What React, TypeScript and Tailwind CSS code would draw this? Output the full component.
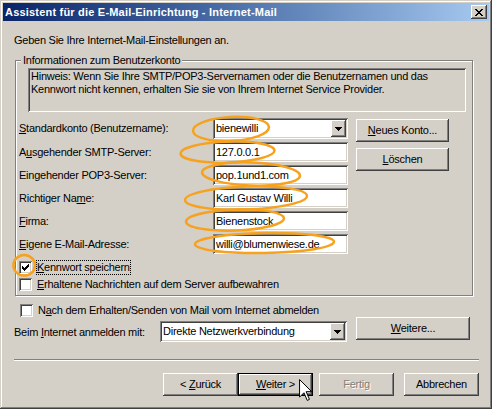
import React from "react";

const RAISED =
  "bg-[#d4d0c8] shadow-[inset_-1px_-1px_0_#404040,inset_1px_1px_0_#ffffff,inset_-2px_-2px_0_#808080,inset_2px_2px_0_#d4d0c8]";
const SUNKEN =
  "shadow-[inset_1px_1px_0_#808080,inset_-1px_-1px_0_#ffffff,inset_2px_2px_0_#404040,inset_-2px_-2px_0_#d4d0c8]";

function Pixels({ rows, color = "#000" }: { rows: string[]; color?: string }) {
  return (
    <svg width={rows[0].length} height={rows.length} shapeRendering="crispEdges" className="block">
      {rows.flatMap((r, y) =>
        r.split("").map((c, x) =>
          c === "X" ? <rect key={`${x}-${y}`} x={x} y={y} width={1} height={1} fill={color} /> : null
        )
      )}
    </svg>
  );
}

const CHECK = ["......X", ".....XX", "X...XXX", "XX.XXX.", "XXXXX..", ".XXX...", "..X...."];
const CLOSE = ["XX....XX", ".XX..XX.", "..XXXX..", "...XX...", "..XXXX..", ".XX..XX.", "XX....XX"];
const ARROW = ["XXXXXXX", ".XXXXX.", "..XXX..", "...X..."];

function Button({
  children,
  className = "",
  isDefault = false,
  disabled = false,
}: {
  children: React.ReactNode;
  className?: string;
  isDefault?: boolean;
  disabled?: boolean;
}) {
  const inner = (
    <div
      className={`w-full h-full flex items-center justify-center leading-[13px] ${RAISED} ${
        disabled ? "text-[#808080] [text-shadow:1px_1px_0_#ffffff]" : "text-black"
      }`}
    >
      {children}
    </div>
  );
  return (
    <div className={`h-[23px] ${isDefault ? "border border-black" : ""} ${className}`}>{inner}</div>
  );
}

function TextBox({ value }: { value: string }) {
  return (
    <div className={`w-[135px] h-[20px] bg-white ${SUNKEN} flex items-center pl-[3px] leading-[13px] whitespace-nowrap`}>
      {value}
    </div>
  );
}

function Combo({ value, className = "" }: { value: string; className?: string }) {
  return (
    <div className={`h-[21px] bg-white ${SUNKEN} flex items-center p-[2px] ${className}`}>
      <div className="flex-1 pl-[1px] leading-[13px] whitespace-nowrap overflow-hidden">{value}</div>
      <div className={`w-[15px] h-[17px] flex items-center justify-center ${RAISED}`}>
        <Pixels rows={ARROW} />
      </div>
    </div>
  );
}

function CheckBox({ checked }: { checked: boolean }) {
  return (
    <div className={`w-[13px] h-[13px] shrink-0 bg-white ${SUNKEN} flex items-center justify-center`}>
      {checked ? <Pixels rows={CHECK} /> : null}
    </div>
  );
}

function Row({ label, children }: { label: React.ReactNode; children: React.ReactNode }) {
  return (
    <div className="flex items-center">
      <div className="w-[194px] leading-[13px] whitespace-nowrap">{label}</div>
      {children}
    </div>
  );
}

export default function App() {
  return (
    <div
      className="relative w-[492px] h-[409px] p-[3px] bg-[#d4d0c8] text-black text-[11px] tracking-[-0.25px] font-['Liberation_Sans',Arial,sans-serif] shadow-[inset_-1px_-1px_0_#404040,inset_1px_1px_0_#d4d0c8,inset_-2px_-2px_0_#808080,inset_2px_2px_0_#ffffff] overflow-hidden"
    >
      {/* Title bar */}
      <div className="h-[18px] flex items-center bg-linear-to-r from-[#0a246a] to-[#a6caf0]">
        <div className="pl-[2px] text-white font-bold text-[11px] tracking-[0.2px] leading-[13px] whitespace-nowrap">
          Assistent für die E-Mail-Einrichtung - Internet-Mail
        </div>
        <div className={`ml-auto mr-[2px] w-[16px] h-[14px] flex items-center justify-center ${RAISED}`}>
          <Pixels rows={CLOSE} />
        </div>
      </div>

      {/* Intro */}
      <div className="ml-[11px] mt-[13px] leading-[13px]">Geben Sie Ihre Internet-Mail-Einstellungen an.</div>

      {/* Group box */}
      <fieldset className="ml-[12px] mt-[7px] w-[458px] border border-[#808080] shadow-[inset_1px_1px_0_#ffffff,1px_1px_0_#ffffff] pb-[2px]">
        <legend className="ml-[5px] px-[2px] leading-[13px] bg-[#d4d0c8]">Informationen zum Benutzerkonto</legend>

        <div className={`ml-[12px] mt-[1px] w-[438px] h-[44px] ${SUNKEN} pl-[3px] pt-[2px] leading-[13px] whitespace-nowrap`}>
          Hinweis: Wenn Sie Ihre SMTP/POP3-Servernamen oder die Benutzernamen und das
          <br />
          Kennwort nicht kennen, erhalten Sie sie von Ihrem Internet Service Provider.
        </div>

        <div className="flex mt-[6px] ml-[3px]">
          <div className="flex flex-col gap-[3px]">
            <Row
              label={
                <>
                  <u>S</u>tandardkonto (Benutzername):
                </>
              }
            >
              <Combo value="bienewilli" className="w-[135px]" />
            </Row>
            <Row
              label={
                <>
                  A<u>u</u>sgehender SMTP-Server:
                </>
              }
            >
              <TextBox value="127.0.0.1" />
            </Row>
            <Row label="Eingehender POP3-Server:">
              <TextBox value="pop.1und1.com" />
            </Row>
            <Row
              label={
                <>
                  Richtiger Na<u>m</u>e:
                </>
              }
            >
              <TextBox value="Karl Gustav Willi" />
            </Row>
            <Row
              label={
                <>
                  <u>F</u>irma:
                </>
              }
            >
              <TextBox value="Bienenstock" />
            </Row>
            <Row
              label={
                <>
                  <u>E</u>igene E-Mail-Adresse:
                </>
              }
            >
              <TextBox value="willi@blumenwiese.de" />
            </Row>
          </div>
          <div className="ml-[8px] flex flex-col">
            <Button className="mt-[1px] w-[93px]">
              <span>
                <u>N</u>eues Konto...
              </span>
            </Button>
            <Button className="mt-[6px] w-[93px]">
              <span>
                <u>L</u>öschen
              </span>
            </Button>
          </div>
        </div>

        <div className="mt-[5px] ml-[3px]">
          <div className="flex items-center h-[17px]">
            <CheckBox checked />
            <span className="ml-[4px] border border-dotted border-black leading-[13px] whitespace-nowrap">
              <u>K</u>ennwort speichern
            </span>
          </div>
          <div className="flex items-center h-[17px]">
            <CheckBox checked={false} />
            <span className="ml-[4px] border border-transparent leading-[13px] whitespace-nowrap">
              <u>E</u>rhaltene Nachrichten auf dem Server aufbewahren
            </span>
          </div>
        </div>
      </fieldset>

      {/* Below group */}
      <div className="mt-[7px] ml-[17px] h-[14px] flex items-start">
        <div className="mt-[1px]">
          <CheckBox checked={false} />
        </div>
        <span className="ml-[4px] border border-transparent leading-[13px] whitespace-nowrap">
          N<u>a</u>ch dem Erhalten/Senden von Mail vom Internet abmelden
        </span>
      </div>

      <div className="flex items-start h-[25px]">
        <div className="ml-[11px] w-[146px] mt-[9px] leading-[13px] whitespace-nowrap">
          Beim <u>I</u>nternet anmelden mit:
        </div>
        <Combo value="Direkte Netzwerkverbindung" className="mt-[4px] w-[187px]" />
        <Button className="ml-[9px] w-[114px]">
          <span>
            <u>W</u>eitere...
          </span>
        </Button>
      </div>

      <div className="mt-[17px] ml-[11px] w-[465px] h-[2px] border-t border-t-[#808080] border-b border-b-white" />

      <div className="mt-[12px] ml-[160px] flex">
        <Button className="w-[75px]">
          <span>
            &lt; <u>Z</u>urück
          </span>
        </Button>
        <Button className="w-[75px]" isDefault>
          <span>
            <u>W</u>eiter &gt;
          </span>
        </Button>
        <Button className="ml-[6px] w-[75px]" disabled>
          Fertig
        </Button>
        <Button className="ml-[10px] w-[75px]">Abbrechen</Button>
      </div>

      {/* Annotation overlay */}
      <svg className="absolute left-0 top-0 pointer-events-none" width={492} height={409}>
        <g fill="none" stroke="#f6a21e" strokeWidth={2.5}>
          <ellipse cx={231} cy={129} rx={38} ry={12} transform="rotate(-3 231 129)" />
          <ellipse cx={227.5} cy={152} rx={47} ry={10.5} transform="rotate(-2 227.5 152)" />
          <ellipse cx={251} cy={174} rx={49} ry={11.5} transform="rotate(2 251 174)" />
          <ellipse cx={246} cy={198} rx={61} ry={11.5} transform="rotate(-2 246 198)" />
          <ellipse cx={235} cy={220} rx={49} ry={10.5} transform="rotate(-2 235 220)" />
          <ellipse cx={264.5} cy={243} rx={69.5} ry={10} transform="rotate(-1 264.5 243)" />
          <ellipse cx={24.2} cy={265.3} rx={10.8} ry={10.3} />
        </g>
        <g transform="translate(299 379) scale(1.1)">
          <path
            d="M0.5 0.5 L0.5 16.5 L4.5 12.5 L7.5 19.5 L9.5 18.5 L6.5 11.5 L11.5 11.5 Z"
            fill="#ffffff"
            stroke="#000000"
            strokeWidth={0.9}
            strokeLinejoin="miter"
          />
        </g>
      </svg>
    </div>
  );
}
